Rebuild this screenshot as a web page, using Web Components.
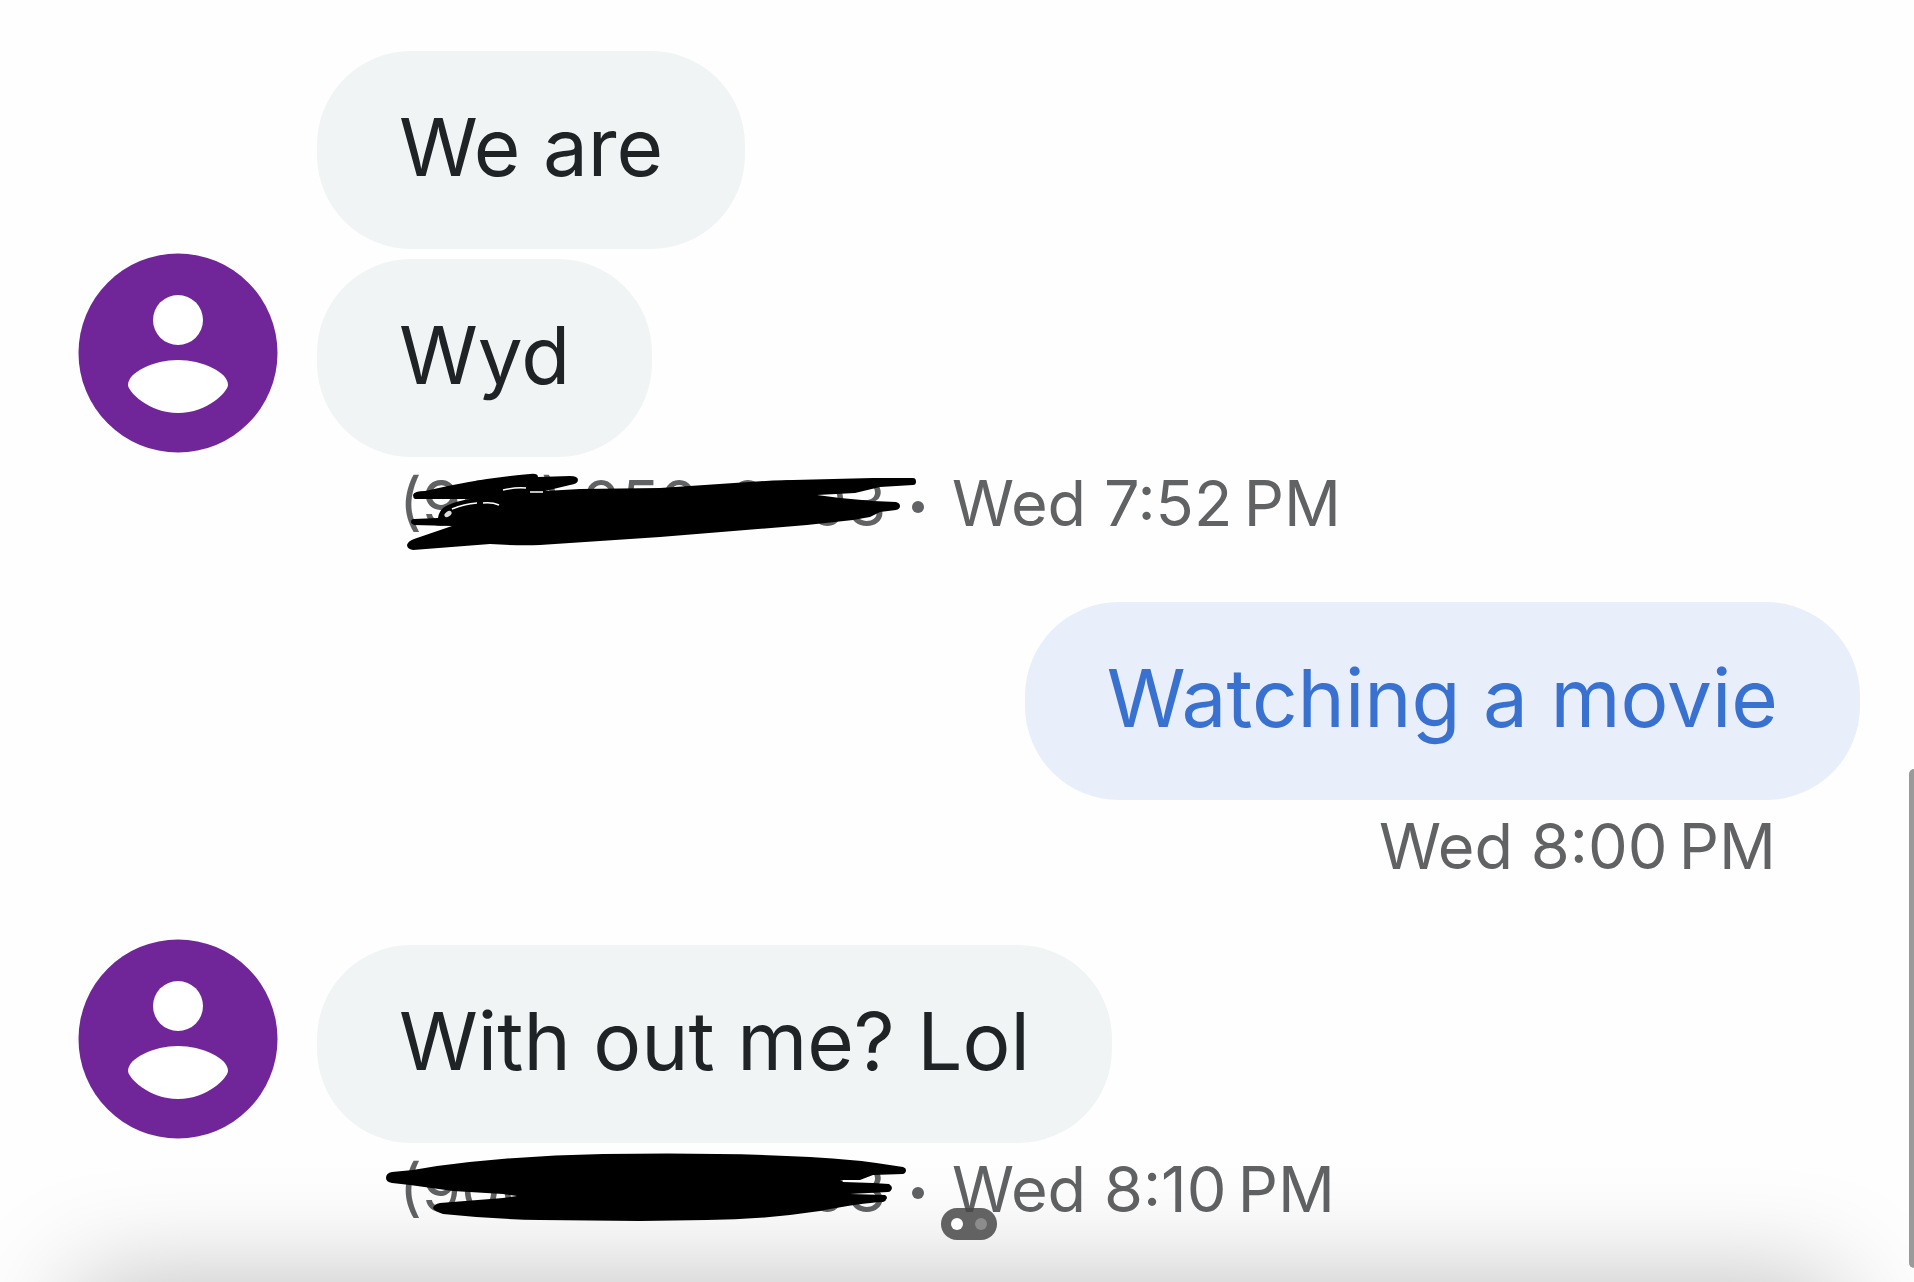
<!DOCTYPE html>
<html lang="en">
<head>
<meta charset="utf-8">
<meta name="viewport" content="width=device-width, initial-scale=1">
<title>Conversation</title>
<style>
  body { margin: 0; background: #fefefe; font-family: Inter, "Liberation Sans", sans-serif; }
</style>
</head>
<body>
<chat-thread>
  <chat-group>
    <chat-bubble>We are</chat-bubble>
    <chat-bubble avatar>Wyd</chat-bubble>
    <chat-meta>
      <redacted-phone slot="from" mark="scrawl">(900) 050-0003</redacted-phone>
      Wed 7:52&#8201;PM
    </chat-meta>
  </chat-group>
  <chat-group sent>
    <chat-bubble sent>Watching a movie</chat-bubble>
    <chat-meta sent>Wed 8:00&#8201;PM</chat-meta>
  </chat-group>
  <chat-group>
    <chat-bubble avatar>With out me? Lol</chat-bubble>
    <chat-meta>
      <redacted-phone slot="from" mark="smear">(900) 050-0003</redacted-phone>
      Wed 8:10&#8201;PM
    </chat-meta>
  </chat-group>
</chat-thread>
<edge-shade></edge-shade>
<page-dots></page-dots>
<scroll-thumb></scroll-thumb>

<script>
  function define(name, html) {
    const template = document.createElement('template');
    template.innerHTML = html;
    customElements.define(name, class extends HTMLElement {
      constructor() {
        super();
        this.attachShadow({ mode: 'open' }).append(template.content.cloneNode(true));
      }
    });
  }

  define('chat-thread', `
    <style>
      :host { display: flex; flex-direction: column; gap: 59px; padding: 51px 54px 0 78px; }
    </style>
    <slot></slot>`);

  define('chat-group', `
    <style>
      :host { display: flex; flex-direction: column; align-items: flex-start; }
      :host([sent]) { align-items: flex-end; }
      ::slotted(chat-bubble:not(:first-child)) { margin-top: 10px; }
    </style>
    <slot></slot>`);

  define('chat-bubble', `
    <style>
      :host { display: flex; align-items: flex-end; gap: 39px; }
      svg { display: none; width: 200px; height: 200px; margin-bottom: 4px; margin-top: -6px; }
      .space { width: 200px; }
      :host([avatar]) svg { display: block; }
      :host([avatar]) .space, :host([sent]) .space { display: none; }
      p { margin: 0; padding: 46px 82px 52px; border-radius: 94px; background: #f0f4f5; color: #202325; font-size: 80px; line-height: 100px; white-space: nowrap; }
      :host([sent]) p { background: #e8eefa; color: #3871cf; }
    </style>
    <div class="space"></div>
    <svg viewBox="0 0 200 200" role="img" aria-label="Contact">
      <circle cx="100" cy="100" r="99.5" fill="#702699"/>
      <circle cx="100" cy="67" r="25" fill="#fff"/>
      <path d="M50 132C50 119 76 107 100 107S150 119 150 132C150 138 130 160 100 160S50 138 50 132Z" fill="#fff"/>
    </svg>
    <p><slot></slot></p>`);

  define('chat-meta', `
    <style>
      :host { display: flex; align-items: center; padding: 6px 0 0 321px; color: #616264; font-size: 63px; line-height: 80px; white-space: nowrap; }
      :host([sent]) { padding: 6px 84px 0 0; }
      ::slotted(redacted-phone) { margin-right: 60px; }
    </style>
    <slot name="from"></slot><span><slot></slot></span>`);

  customElements.define('redacted-phone', class extends HTMLElement {
    connectedCallback() {
      const marks = {
        scrawl: `
          <path d="M33 35Q34 31 45 31Q100 18 150 14Q158 13 158 17L190 16Q198 16 198 20Q198 24 190 25L165 31L200 29L280 28L393 20.500L493 18L533 18Q536 18 536 21.500Q536 25 533 25L500 27L475 33L437 35L460 38L493 41L516 42Q520 43 520 46Q520 49 516 50L500 52L490 57L473 60L427 65L280 77L160 85Q140 86 110 84L33 90Q27 89 27 85Q28 81 34 79L72 66L34 65Q31 64 31 62Q31 59 34 59L58 58Q59 50 66 46Q76 41 90 39L47 39L35 39Q33 38 33 35Z"/>
          <path d="M72 49Q84 44 97 43M103 43Q112 42 119 45M123 30Q136 27 146 28M150 32L163 32" fill="none" stroke="#fff" stroke-width="1.500"/>
          <ellipse cx="68" cy="54" rx="4" ry="2.500" fill="#ddd" transform="rotate(-35 68 54)"/>`,
        smear: `
          <path d="M6 32Q6 27 12 26L33 24L57 20Q140 9 223 8Q340 6 430 11Q475 13 523 21Q526 22 526 24Q526 27 523 28L493 29L480 34L460 34L463 36L493 37L509 38Q512 40 512 42Q511 46 508 46L470 48L505 49Q507 50 507 52Q506 55 503 56Q480 57 440 65Q380 74 327 74L260 75L160 74Q110 73 63 68Q54 65 53 62Q54 58 60 57L123 52L137 50L123 48L73 45L30 39L12 37Q6 36 6 32Z"/>`
      };
      this.attachShadow({ mode: 'open' }).innerHTML = `
        <style>
          :host { display: block; position: relative; width: 493px; }
          :host::after { content: ""; position: absolute; left: 513px; top: 38px; width: 12px; height: 12px; border-radius: 50%; background: currentColor; }
          svg { position: absolute; left: -19px; top: -3px; width: 560px; height: 100px; }
        </style>
        <slot></slot>
        <svg viewBox="0 0 560 100" aria-hidden="true">${marks[this.getAttribute('mark')]}</svg>`;
    }
  });

  define('edge-shade', `
    <style>
      :host { position: fixed; left: 0; right: 0; bottom: 0; height: 130px; overflow: hidden; pointer-events: none; }
      div { position: absolute; top: 100%; left: 76px; right: 76px; height: 200px; box-shadow: 0 0 110px rgba(0, 0, 0, .26); }
    </style>
    <div></div>`);

  define('page-dots', `
    <style>
      :host { position: fixed; left: calc(50% - 16px); bottom: 42px; display: flex; align-items: center; justify-content: center; gap: 12px; width: 56px; height: 32px; border-radius: 16px; background: rgba(70, 70, 70, .84); }
      button { width: 12px; height: 12px; padding: 0; border: 0; border-radius: 50%; background: #8c8c8c; }
      button[aria-current] { background: #fff; }
    </style>
    <button type="button" aria-label="Image 1" aria-current="true"></button>
    <button type="button" aria-label="Image 2"></button>`);

  define('scroll-thumb', `
    <style>
      :host { position: fixed; right: 0; top: 60%; bottom: 14px; width: 5px; border-radius: 5px 0 0 5px; background: #9a9a9a; }
    </style>`);
</script>
</body>
</html>
